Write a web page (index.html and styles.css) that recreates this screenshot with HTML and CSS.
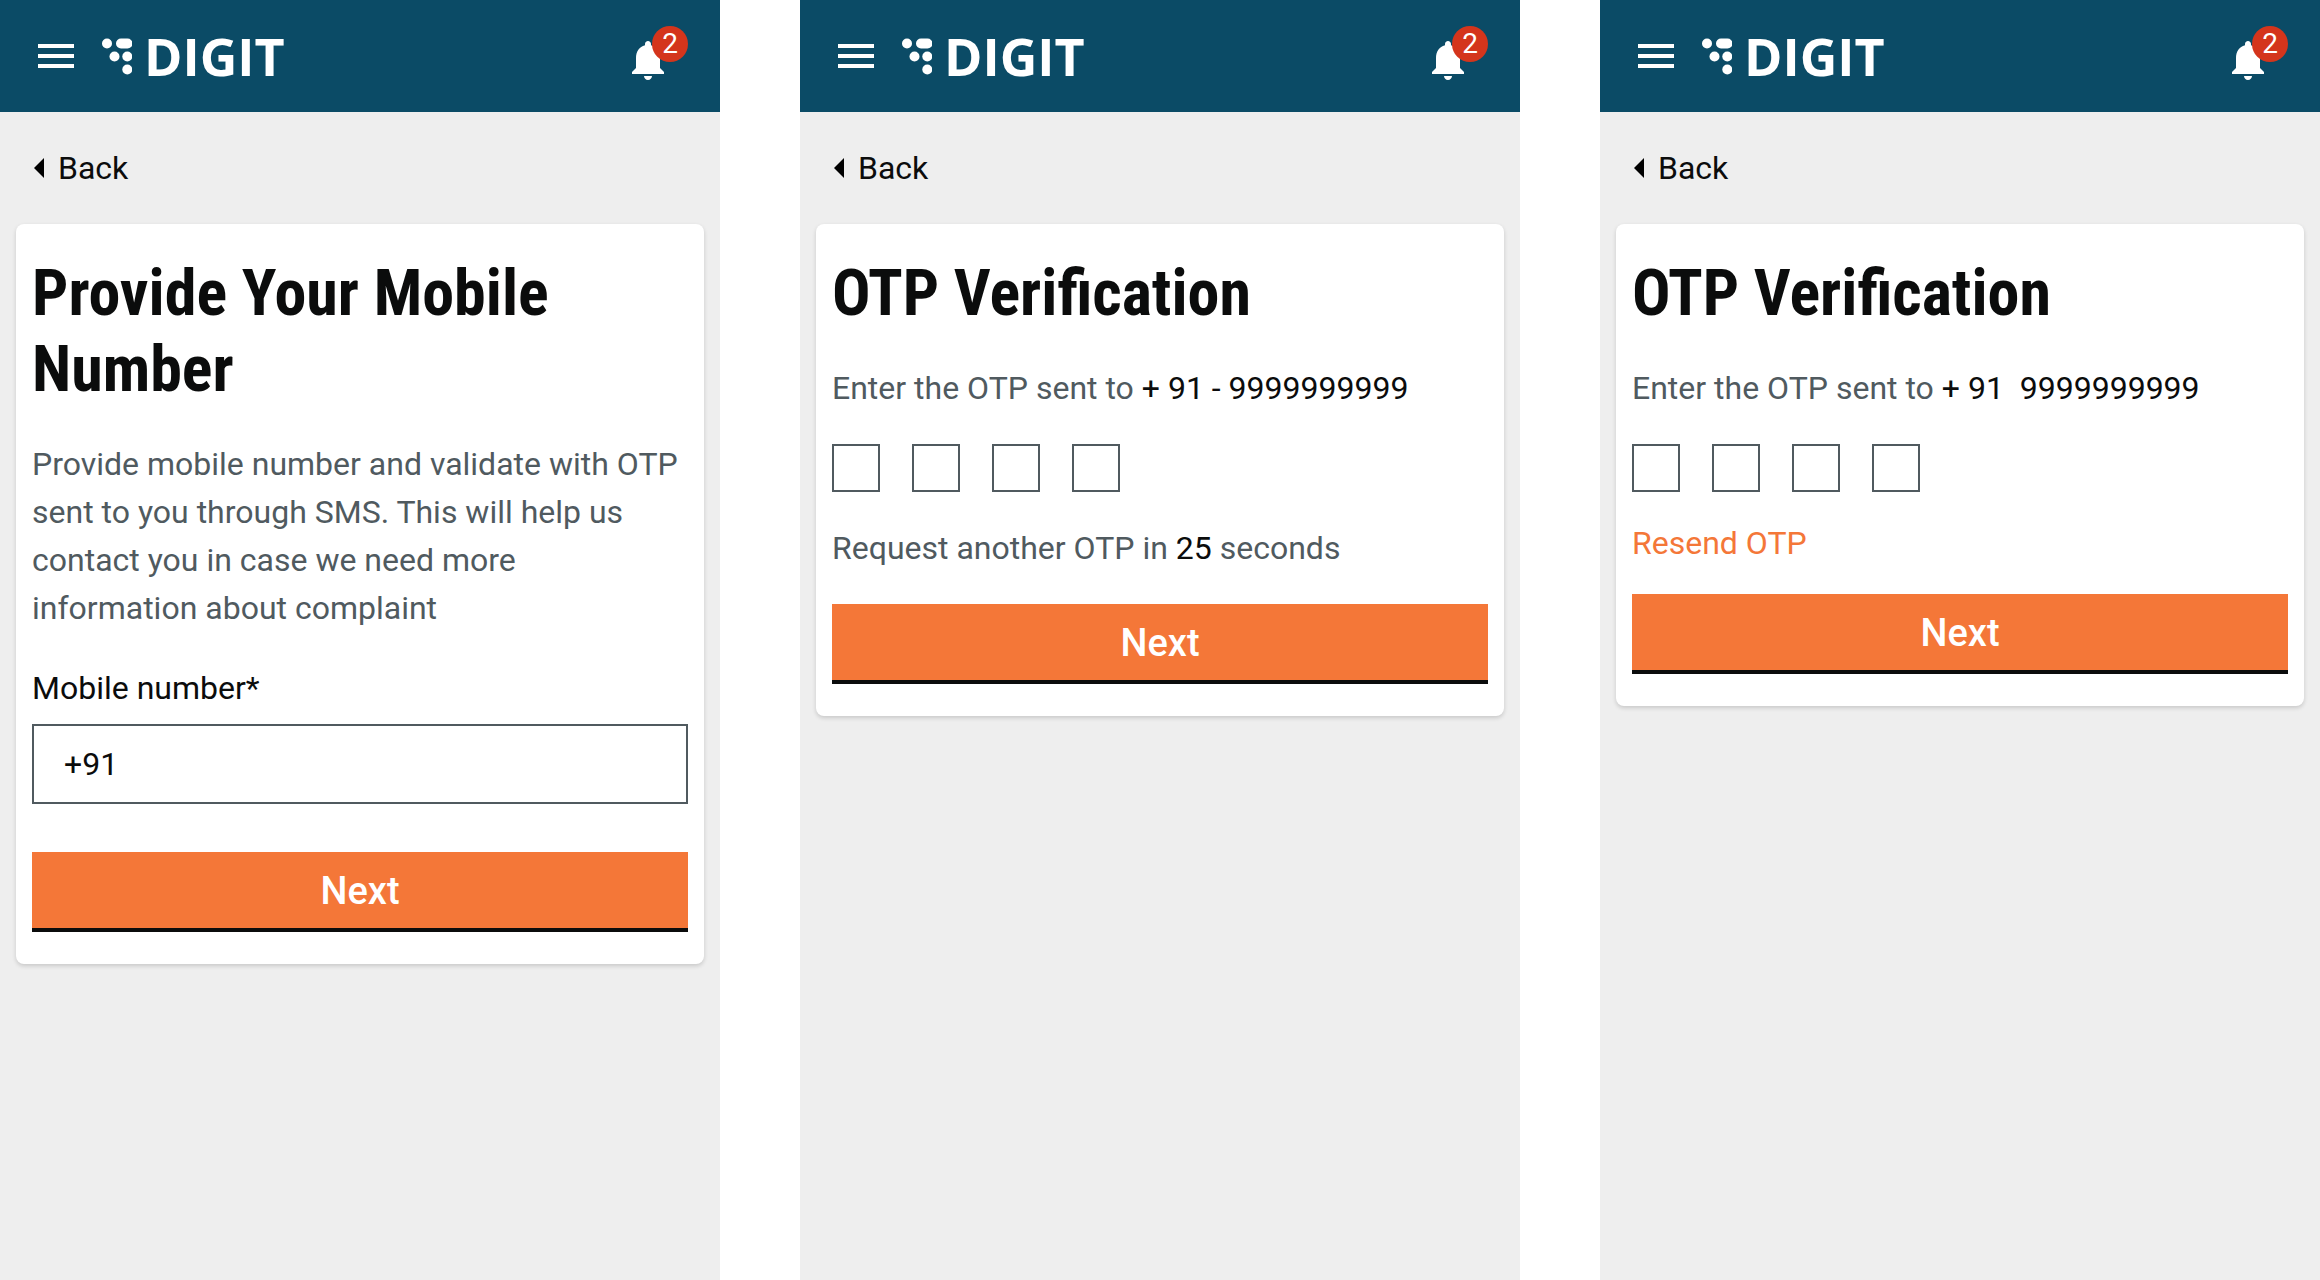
FILE: index.html
```html
<!DOCTYPE html>
<html lang="en">
<head>
  <meta charset="utf-8">
  <meta name="viewport" content="width=device-width, initial-scale=1">
  <title>DIGIT – OTP Verification</title>
  <link rel="stylesheet" href="styles.css">
</head>
<body>
  <svg class="sprite" aria-hidden="true">
    <symbol id="icon-menu" viewBox="0 0 24 24">
      <path d="M3 18h18v-2H3v2zm0-5h18v-2H3v2zm0-7v2h18V6H3z"/>
    </symbol>
    <symbol id="icon-bell" viewBox="0 0 24 24">
      <path d="M12 22c1.1 0 2-.9 2-2h-4c0 1.1.89 2 2 2zm6-6v-5c0-3.07-1.64-5.64-4.5-6.32V4c0-.83-.67-1.5-1.5-1.5s-1.5.67-1.5 1.5v.68C7.63 5.36 6 7.92 6 11v5l-2 2v1h16v-1l-2-2z"/>
    </symbol>
    <symbol id="icon-back" viewBox="0 0 10 20">
      <path d="M10 0v20L0 10z"/>
    </symbol>
    <symbol id="logo-mark" viewBox="0 0 30 37">
      <circle cx="5" cy="5.500" r="5"/>
      <rect x="14" y="0.500" width="16.500" height="10" rx="5"/>
      <circle cx="12.500" cy="18.500" r="5"/>
      <circle cx="25.300" cy="18.500" r="5"/>
      <circle cx="25.300" cy="31.500" r="5"/>
    </symbol>
  </svg>

  <main class="screens">
    <section class="screen">
      <header class="topbar">
        <button class="icon-button" type="button" aria-label="Menu"><svg class="icon"><use href="#icon-menu"/></svg></button>
        <a class="logo" href="#"><svg class="logo-mark" aria-hidden="true"><use href="#logo-mark"/></svg><span class="logo-text">DIGIT</span></a>
        <button class="icon-button alerts" type="button" aria-label="Notifications"><svg class="icon"><use href="#icon-bell"/></svg><span class="badge">2</span></button>
      </header>
      <a class="back" href="#"><svg class="back-arrow" aria-hidden="true"><use href="#icon-back"/></svg>Back</a>
      <form class="card">
        <h1 class="title">Provide Your Mobile Number</h1>
        <p class="text">Provide mobile number and validate with OTP sent to you through SMS. This will help us contact you in case we need more information about complaint</p>
        <div class="field">
          <label class="label" for="mobile">Mobile number*</label>
          <input class="input" id="mobile" type="tel" value="+91">
        </div>
        <button class="next next-spaced" type="button">Next</button>
      </form>
    </section>

    <section class="screen">
      <header class="topbar">
        <button class="icon-button" type="button" aria-label="Menu"><svg class="icon"><use href="#icon-menu"/></svg></button>
        <a class="logo" href="#"><svg class="logo-mark" aria-hidden="true"><use href="#logo-mark"/></svg><span class="logo-text">DIGIT</span></a>
        <button class="icon-button alerts" type="button" aria-label="Notifications"><svg class="icon"><use href="#icon-bell"/></svg><span class="badge">2</span></button>
      </header>
      <a class="back" href="#"><svg class="back-arrow" aria-hidden="true"><use href="#icon-back"/></svg>Back</a>
      <form class="card">
        <h1 class="title">OTP Verification</h1>
        <p class="text">Enter the OTP sent to <span class="strong">+ 91 - 9999999999</span></p>
        <div class="otp">
          <input class="otp-digit" type="text" maxlength="1" aria-label="Digit 1">
          <input class="otp-digit" type="text" maxlength="1" aria-label="Digit 2">
          <input class="otp-digit" type="text" maxlength="1" aria-label="Digit 3">
          <input class="otp-digit" type="text" maxlength="1" aria-label="Digit 4">
        </div>
        <p class="text">Request another OTP in <span class="strong">25</span> seconds</p>
        <button class="next" type="button">Next</button>
      </form>
    </section>

    <section class="screen">
      <header class="topbar">
        <button class="icon-button" type="button" aria-label="Menu"><svg class="icon"><use href="#icon-menu"/></svg></button>
        <a class="logo" href="#"><svg class="logo-mark" aria-hidden="true"><use href="#logo-mark"/></svg><span class="logo-text">DIGIT</span></a>
        <button class="icon-button alerts" type="button" aria-label="Notifications"><svg class="icon"><use href="#icon-bell"/></svg><span class="badge">2</span></button>
      </header>
      <a class="back" href="#"><svg class="back-arrow" aria-hidden="true"><use href="#icon-back"/></svg>Back</a>
      <form class="card">
        <h1 class="title">OTP Verification</h1>
        <p class="text">Enter the OTP sent to <span class="strong">+ 91 &nbsp;9999999999</span></p>
        <div class="otp">
          <input class="otp-digit" type="text" maxlength="1" aria-label="Digit 1">
          <input class="otp-digit" type="text" maxlength="1" aria-label="Digit 2">
          <input class="otp-digit" type="text" maxlength="1" aria-label="Digit 3">
          <input class="otp-digit" type="text" maxlength="1" aria-label="Digit 4">
        </div>
        <a class="resend" href="#">Resend OTP</a>
        <button class="next" type="button">Next</button>
      </form>
    </section>
  </main>
</body>
</html>
```
FILE: styles.css
```css
:root {
  --ink: #0b0c0c;
  --muted: #505a5f;
  --accent: #f47738;
  --header: #0b4b66;
}

* {
  box-sizing: border-box;
}

body {
  margin: 0;
  background: #fff;
  color: var(--ink);
  font-family: Roboto, sans-serif;
  font-size: 32px;
  line-height: 48px;
}

button,
input {
  font: inherit;
  color: inherit;
  border-radius: 0;
  margin: 0;
}

a {
  color: inherit;
  text-decoration: none;
}

.sprite {
  display: none;
}

.screens {
  display: grid;
  grid-template-columns: repeat(3, 1fr);
  column-gap: 80px;
  min-height: 100vh;
}

.screen {
  display: flex;
  flex-direction: column;
  background: #eee;
}

.topbar {
  display: flex;
  align-items: center;
  height: 112px;
  padding: 0 48px 0 32px;
  background: var(--header);
  color: #fff;
}

.icon-button {
  padding: 0;
  border: 0;
  background: none;
}

.icon {
  display: block;
  width: 48px;
  height: 48px;
  fill: currentColor;
}

.logo {
  display: flex;
  align-items: center;
  gap: 12px;
  margin-left: 22px;
}

.logo-mark {
  width: 30px;
  height: 37px;
  overflow: visible;
  fill: currentColor;
}

.logo-text {
  font-family: "Open Sans", sans-serif;
  font-size: 52px;
  font-weight: 700;
}

.alerts {
  position: relative;
  margin: 8px 0 0 auto;
}

.badge {
  position: absolute;
  top: -10px;
  right: -16px;
  width: 36px;
  height: 36px;
  border-radius: 50%;
  background: #d4351c;
  font-size: 28px;
  line-height: 36px;
  text-align: center;
}

.back {
  display: flex;
  align-items: center;
  align-self: flex-start;
  gap: 14px;
  margin: 32px 34px;
}

.back-arrow {
  width: 10px;
  height: 20px;
}

.card {
  display: flex;
  flex-direction: column;
  gap: 32px;
  margin: 0 16px;
  padding: 32px 16px;
  border-radius: 8px;
  background: #fff;
  box-shadow: 0 2px 4px rgba(0, 0, 0, 0.16);
}

.title {
  margin: 0;
  font-family: "Roboto Condensed", Roboto, sans-serif;
  font-size: 64px;
  font-weight: 700;
  line-height: 76px;
}

.text {
  margin: 0;
  color: var(--muted);
}

.strong {
  color: var(--ink);
}

.field {
  display: flex;
  flex-direction: column;
  gap: 12px;
}

.input {
  width: 100%;
  height: 80px;
  padding: 0 30px;
  border: 2px solid var(--muted);
  background: #fff;
}

.otp {
  display: flex;
  gap: 32px;
}

.otp-digit {
  width: 48px;
  height: 48px;
  padding: 0;
  border: 2px solid var(--muted);
  background: #fff;
  text-align: center;
}

.resend {
  align-self: flex-start;
  color: var(--accent);
  line-height: 38px;
}

.next {
  height: 80px;
  padding: 2px 0 0;
  border: 0;
  border-bottom: 4px solid var(--ink);
  background: var(--accent);
  color: #fff;
  font-size: 38px;
  font-weight: 500;
}

.next-spaced {
  margin-top: 16px;
}
```
